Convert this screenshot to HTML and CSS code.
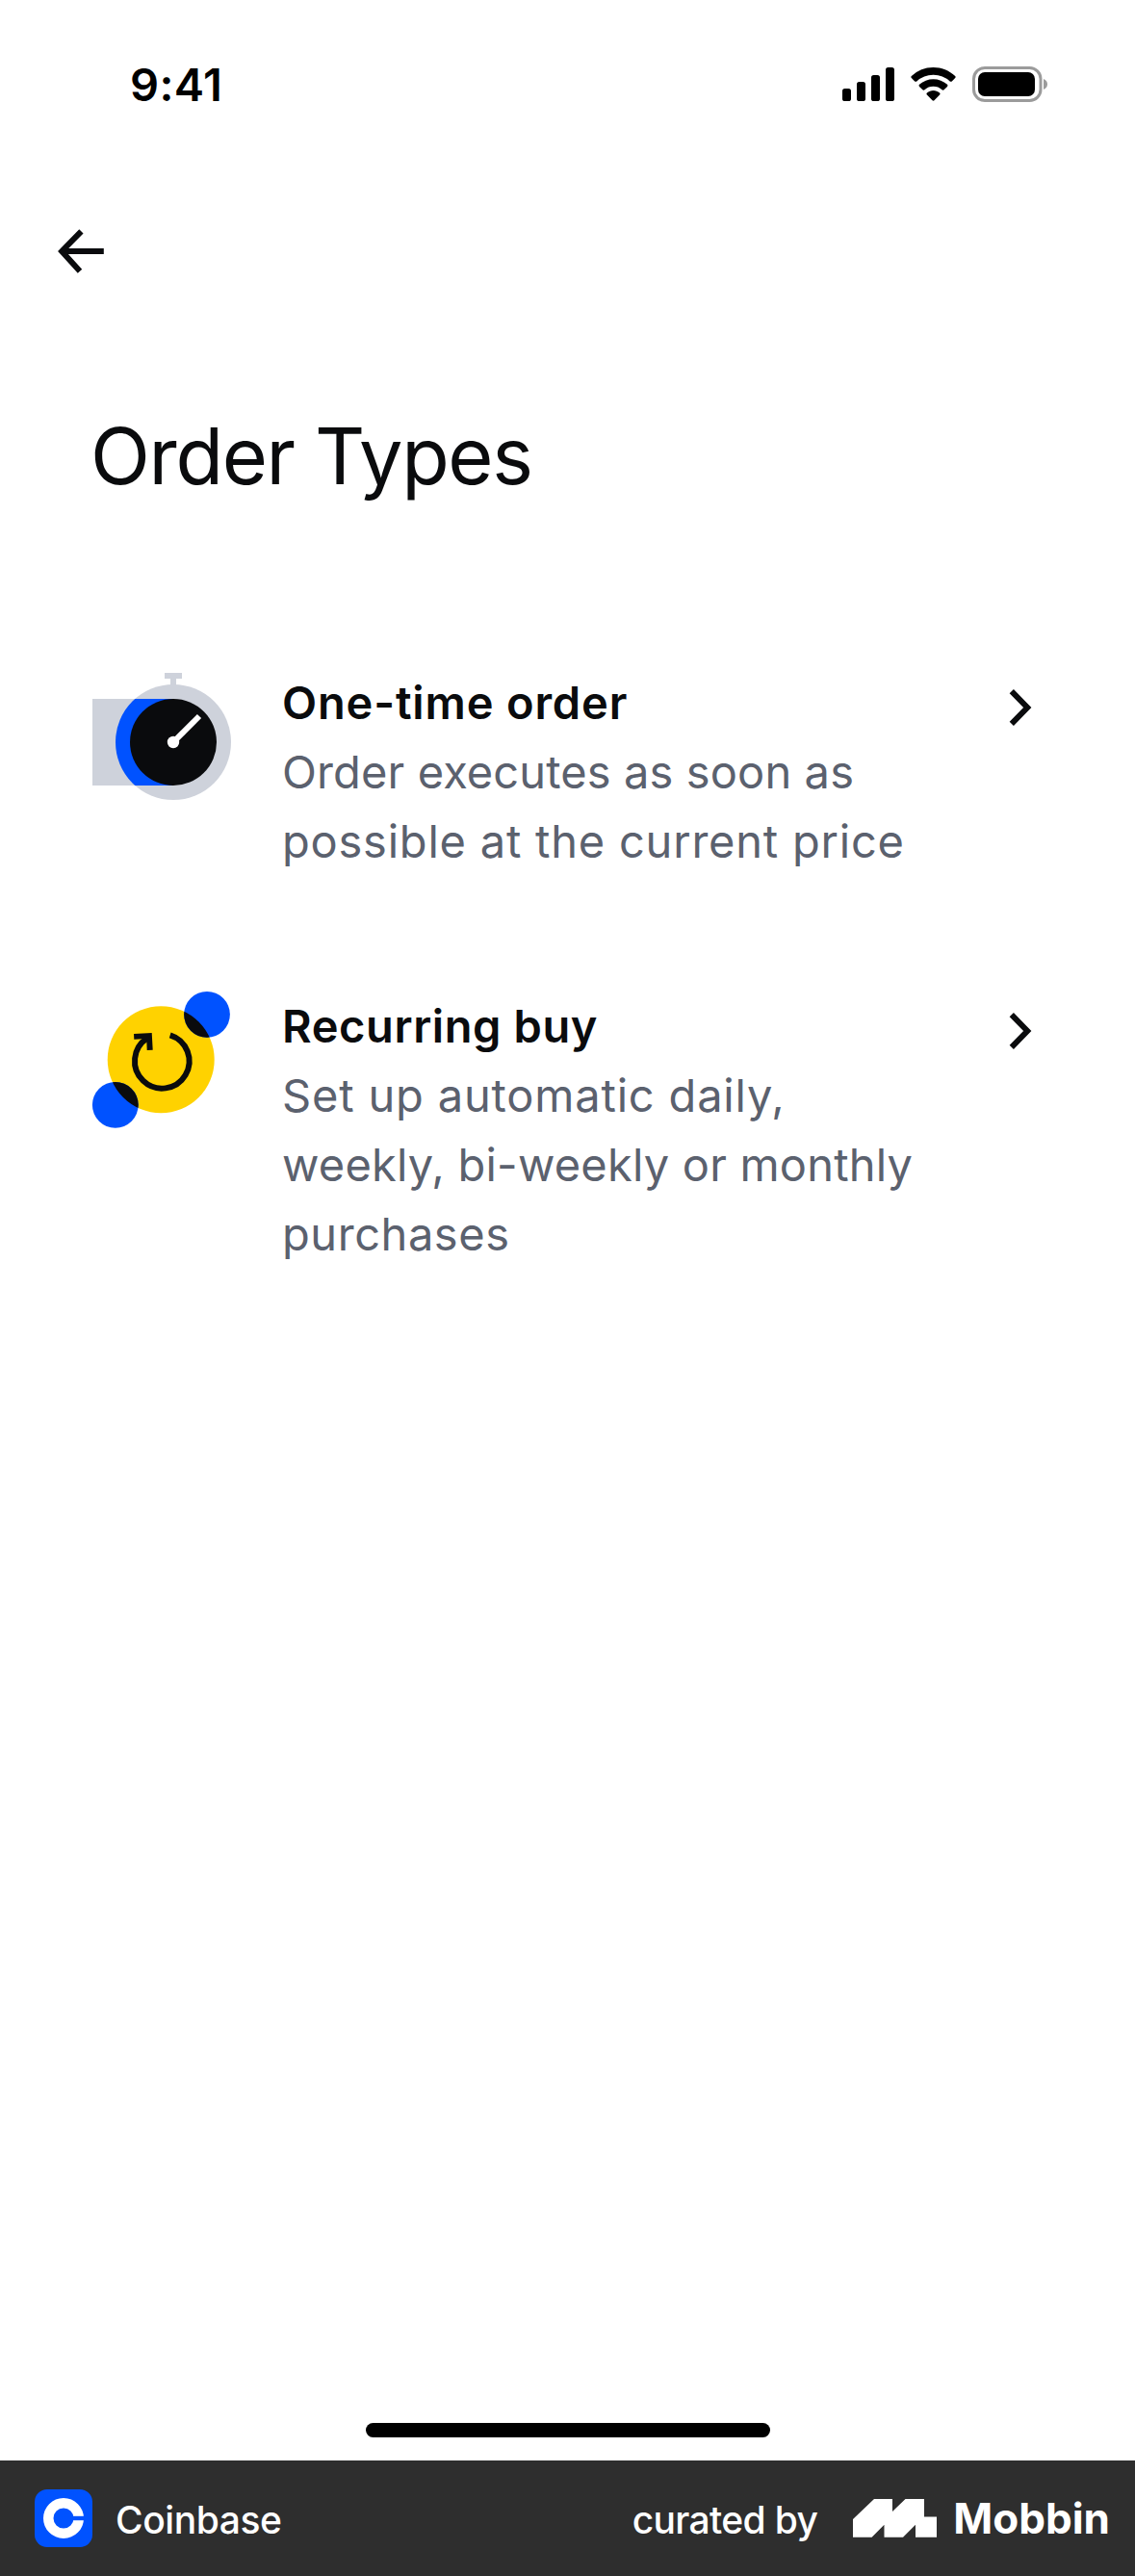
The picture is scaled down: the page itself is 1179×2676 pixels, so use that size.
FILE: index.html
```html
<!DOCTYPE html>
<html lang="en">
<head>
<meta charset="utf-8">
<meta name="viewport" content="width=device-width">
<title>Order Types</title>
<link rel="stylesheet" href="styles.css">
</head>
<body>
<div class="screen">
  <div class="status-bar">
    <span class="time">9:41</span>
    <svg class="status-icons" width="216" height="40" viewBox="0 0 216 40" aria-hidden="true">
      <rect x="3" y="24" width="9" height="13" rx="2.6"/>
      <rect x="18" y="17" width="9" height="20" rx="2.6"/>
      <rect x="33" y="10" width="9" height="27" rx="2.6"/>
      <rect x="48" y="2" width="9" height="35" rx="2.6"/>
      <path d="M97.5 2c8.400 0 16.500 3.200 22.700 9 .6.6.6 1.500 0 2.100l-3.400 3.300c-.6.6-1.500.6-2.100 0A25 25 0 0 0 97.500 9.700a25 25 0 0 0-17.200 6.700c-.6.6-1.500.6-2.100 0l-3.400-3.300c-.6-.6-.6-1.500 0-2.100A33 33 0 0 1 97.500 2z"/>
      <path d="M97.500 14.200c5.400 0 10.500 2 14.500 5.600.6.6.6 1.500 0 2.100l-3.400 3.400c-.6.6-1.500.6-2.100 0a13.500 13.500 0 0 0-18 0c-.6.6-1.500.6-2.100 0L83 21.900c-.6-.6-.6-1.500 0-2.100 4-3.600 9.100-5.600 14.500-5.600z"/>
      <path d="M97.500 26c2.400 0 4.800.9 6.600 2.500.6.5.6 1.400 0 2l-5.600 5.700c-.6.6-1.400.6-2 0l-5.600-5.700c-.6-.6-.6-1.500 0-2 1.800-1.600 4.200-2.500 6.600-2.500z"/>
      <rect x="139.500" y="2.500" width="69.500" height="34" rx="11.500" fill="none" stroke="#9b9b9b" stroke-width="3"/>
      <rect x="144" y="7" width="59" height="25" rx="7"/>
      <path d="M212 14v11c2.600-1 4-3.100 4-5.500s-1.400-4.500-4-5.500z" fill="#9b9b9b"/>
    </svg>
  </div>

  <nav class="nav">
    <svg class="back" width="54" height="48" viewBox="0 0 54 48" fill="none" stroke="#0a0b0d" stroke-width="6" role="img" aria-label="Back">
      <path d="M51.800 24H8"/>
      <path d="M28.400 3.300 8.200 24 27 44.800"/>
    </svg>
  </nav>

  <h1 class="title">Order Types</h1>

  <ul class="list">
    <li class="item">
      <svg class="art" width="144" height="144" viewBox="0 0 144 144" aria-hidden="true">
        <defs><clipPath id="tab"><path d="M0 29h84v90H0z"/></clipPath></defs>
        <path d="M0 29h84v90H0z" fill="#ced2db"/>
        <path d="M75 2h18v6h-6v8h-6V8h-6z" fill="#ced2db"/>
        <circle cx="84" cy="74" r="60" fill="#ced2db"/>
        <circle cx="84" cy="74" r="60" fill="#0052ff" clip-path="url(#tab)"/>
        <circle cx="84" cy="74" r="45" fill="#0a0b0d"/>
        <path d="M84 74l27-27" stroke="#fff" stroke-width="6"/>
        <circle cx="84" cy="74" r="6.200" fill="#fff"/>
      </svg>
      <div class="copy">
        <h2 class="name one-time">One-time order</h2>
        <p class="desc"><span class="line l1">Order executes as soon as</span> <span class="line l2">possible at the current price</span></p>
      </div>
      <svg class="chevron" width="24" height="40" viewBox="0 0 24 40" fill="none" stroke="#0a0b0d" stroke-width="6" aria-hidden="true"><path d="M2.800 3.200 19.200 20 2.800 36.800"/></svg>
    </li>
    <li class="item">
      <svg class="art" width="144" height="144" viewBox="0 0 144 144" aria-hidden="true">
        <defs><clipPath id="disc"><circle cx="71.200" cy="67.700" r="55.500"/></clipPath></defs>
        <circle cx="71.200" cy="67.700" r="55.500" fill="#ffd200"/>
        <g fill="#0052ff"><circle cx="119" cy="20.800" r="23.900"/><circle cx="23.800" cy="114.800" r="23.900"/></g>
        <g fill="#0a0b0d" clip-path="url(#disc)"><circle cx="119" cy="20.800" r="23.900"/><circle cx="23.800" cy="114.800" r="23.900"/></g>
        <path d="M80.700 42.300A28.300 28.300 0 1 1 57 45.500" fill="none" stroke="#0a0b0d" stroke-width="6"/>
        <path d="M43 41 61.700 40 62.700 57.700 56.700 58 56.200 46 43.300 46.700z" fill="#0a0b0d"/>
      </svg>
      <div class="copy">
        <h2 class="name recurring">Recurring buy</h2>
        <p class="desc"><span class="line l3">Set up automatic daily,</span> <span class="line l4">weekly, bi-weekly or monthly</span> <span class="line l5">purchases</span></p>
      </div>
      <svg class="chevron" width="24" height="40" viewBox="0 0 24 40" fill="none" stroke="#0a0b0d" stroke-width="6" aria-hidden="true"><path d="M2.800 3.200 19.200 20 2.800 36.800"/></svg>
    </li>
  </ul>

  <div class="home-indicator"></div>
</div>

<footer class="footer">
  <svg class="app-logo" width="60" height="60" viewBox="0 0 60 60" aria-hidden="true">
    <rect width="60" height="60" rx="13" fill="#0052ff"/>
    <circle cx="30" cy="30" r="15.750" fill="none" stroke="#fff" stroke-width="10.500"/>
    <path d="M39 27.800h13v4.400H39z" fill="#0052ff"/>
  </svg>
  <span class="app-name">Coinbase</span>
  <span class="curated">curated by</span>
  <svg class="mobbin-logo" width="87" height="40" viewBox="0 0 87 40" fill="#fff" aria-hidden="true"><path d="M0 21 22 0H41V13L54.500 0H74V18.500H87V39.700H65V26.700L52 39.700H32.500V26.700L19.600 39.700H0z"/></svg>
  <span class="mobbin">Mobbin</span>
</footer>
</body>
</html>
```
FILE: styles.css
```css
* { box-sizing: border-box; }

body {
  margin: 0;
  height: 2676px;
  display: flex;
  flex-direction: column;
  background: #fff;
  color: #0a0b0d;
  font-family: Inter, "Liberation Sans", sans-serif;
}

.screen {
  flex: 1;
  display: flex;
  flex-direction: column;
}

.status-bar {
  display: flex;
  justify-content: space-between;
  align-items: flex-start;
  height: 176px;
  padding: 58px 91px 0 135px;
  color: #000;
}

.time {
  font-size: 47px;
  font-weight: 600;
  line-height: 60px;
  letter-spacing: .38px;
}

.status-icons { margin-top: 10px; }

.nav {
  height: 250px;
  padding: 61px 56px 0;
}

.back { display: block; }

.title {
  margin: 0;
  padding: 0 94px;
  font-size: 81px;
  font-weight: 400;
  line-height: 96px;
  letter-spacing: -1.35px;
}

.list {
  margin: 172px 0 0;
  padding: 0 107px 0 96px;
  list-style: none;
  display: flex;
  flex-direction: column;
  gap: 48px;
}

.item {
  display: flex;
  align-items: flex-start;
  min-height: 288px;
}

.art {
  flex: none;
  margin: 3px 53px 0 0;
  overflow: visible;
}

.copy { flex: 1; }

.name, .desc {
  margin: 0;
  font-size: 47px;
  line-height: 72px;
}

.name { font-weight: 600; }
.desc { color: #5b616e; }
.line { display: block; white-space: nowrap; }

.one-time { letter-spacing: .84px; }
.recurring { letter-spacing: .6px; }
.l1 { letter-spacing: .12px; }
.l2 { letter-spacing: .78px; }
.l3 { letter-spacing: .82px; }
.l4 { letter-spacing: .2px; }
.l5 { letter-spacing: .55px; }

.chevron {
  flex: none;
  margin-top: 21px;
}

.home-indicator {
  width: 420px;
  height: 15px;
  margin: auto auto 24px;
  border-radius: 8px;
  background: #000;
}

.footer {
  display: flex;
  align-items: center;
  height: 120px;
  padding: 0 26px 0 36px;
  background: #2e2e2e;
  color: #fff;
  line-height: 60px;
}

.app-name, .curated {
  padding-top: 3px;
  font-size: 39px;
  font-weight: 500;
}

.app-name {
  margin-left: 24px;
  letter-spacing: -.44px;
}

.curated {
  margin-left: auto;
  letter-spacing: -.66px;
}

.mobbin-logo { margin: 0 17px 0 37px; }

.mobbin {
  font-size: 44px;
  font-weight: 700;
}
```
